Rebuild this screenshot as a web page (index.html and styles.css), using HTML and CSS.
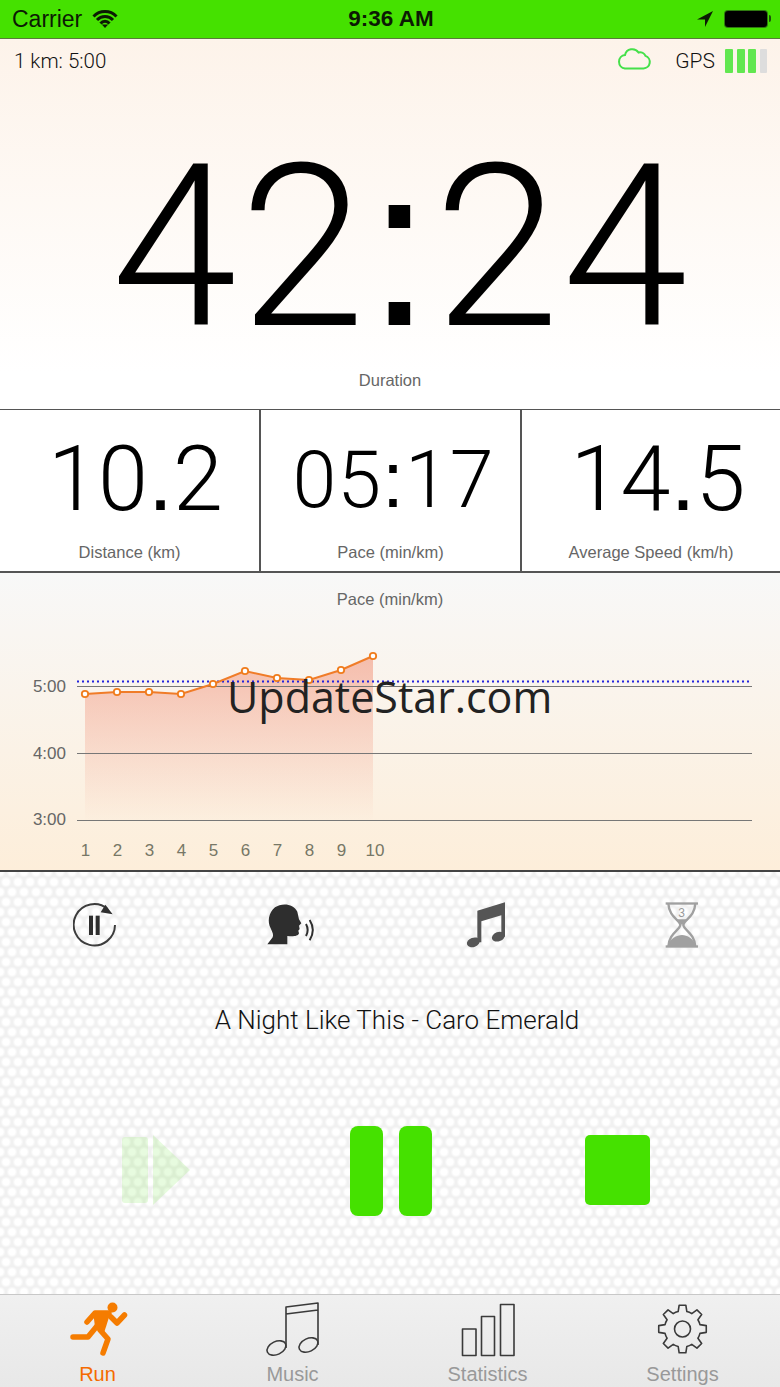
FILE: index.html
```html
<!DOCTYPE html>
<html lang="en">
<head>
<meta charset="utf-8">
<title>Run</title>
<link rel="stylesheet" href="styles.css">
</head>
<body>
<div class="app">
  <header class="status">
    <div class="status-left">
      <span class="carrier">Carrier</span>
      <svg class="wifi" viewBox="0 0 26 18" width="26" height="18"><path d="M1.5 6.5a16 16 0 0 1 23 0M5 10a11 11 0 0 1 16 0M8.500 13.400a6 6 0 0 1 9 0" /><polygon points="13,18 9.800,14.500 16.200,14.500" /></svg>
    </div>
    <div class="clock">9:36 AM</div>
    <div class="status-right">
      <svg class="loc" viewBox="0 0 16 16" width="16" height="16"><polygon points="16,0 0,8.500 8,8.500 8,16" /></svg>
      <span class="battery"><span class="battery-fill"></span></span>
    </div>
  </header>

  <section class="timer">
    <div class="timer-top">
      <span class="goal">1 km: 5:00</span>
      <div class="signals">
        <svg class="cloud" viewBox="0 0 36 23" width="36" height="23"><path d="M9 21.500H27.500a6.500 6.500 0 0 0 2-12.600A6 6 0 0 0 22.500 5.500 7.500 7.500 0 0 0 9 8 6.800 6.800 0 0 0 9 21.500Z" /></svg>
        <span class="gps">GPS</span>
        <span class="bars"><i class="bar"></i><i class="bar"></i><i class="bar"></i><i class="bar bar-off"></i></span>
      </div>
    </div>
    <div class="big">42<span class="sq">:</span>24</div>
    <div class="cap">Duration</div>
  </section>

  <section class="stats">
    <div class="stat">
      <div class="num num-a">10<span class="sq">.</span>2</div>
      <div class="cap">Distance (km)</div>
    </div>
    <div class="stat stat-mid">
      <div class="num num-b">05<span class="sq">:</span>17</div>
      <div class="cap">Pace (min/km)</div>
    </div>
    <div class="stat">
      <div class="num num-c">14<span class="sq">.</span>5</div>
      <div class="cap">Average Speed (km/h)</div>
    </div>
  </section>

  <section class="chart">
    <svg class="chart-svg" viewBox="0 573 780 297" width="780" height="297">
      <defs>
        <linearGradient id="area" x1="0" y1="0" x2="0" y2="1">
          <stop offset="0" stop-color="#f29a82" stop-opacity=".62"/>
          <stop offset="1" stop-color="#f29a82" stop-opacity="0"/>
        </linearGradient>
      </defs>
      <text class="c-title" x="390" y="605">Pace (min/km)</text>
      <path class="area" d="M85 694 117 692 149 692 181 694 213 684 245 671 277 678 309 680 341 670 373 656V822H85Z"/>
      <line class="grid" x1="77" y1="686.500" x2="752" y2="686.500"/>
      <line class="grid" x1="77" y1="753.500" x2="752" y2="753.500"/>
      <line class="grid" x1="77" y1="820.500" x2="752" y2="820.500"/>
      <line class="target" x1="77" y1="681.500" x2="752" y2="681.500"/>
      <path class="line" d="M85 694 117 692 149 692 181 694 213 684 245 671 277 678 309 680 341 670 373 656"/>
      <g class="dots">
        <circle cx="85" cy="694" r="3.200"/><circle cx="117" cy="692" r="3.200"/><circle cx="149" cy="692" r="3.200"/><circle cx="181" cy="694" r="3.200"/><circle cx="213" cy="684" r="3.200"/><circle cx="245" cy="671" r="3.200"/><circle cx="277" cy="678" r="3.200"/><circle cx="309" cy="680" r="3.200"/><circle cx="341" cy="670" r="3.200"/><circle cx="373" cy="656" r="3.200"/>
      </g>
      <g class="y-lab">
        <text x="66" y="692">5:00</text><text x="66" y="759">4:00</text><text x="66" y="825">3:00</text>
      </g>
      <g class="x-lab">
        <text x="85.500" y="856">1</text><text x="117.500" y="856">2</text><text x="149.500" y="856">3</text><text x="181.500" y="856">4</text><text x="213.500" y="856">5</text><text x="245.500" y="856">6</text><text x="277.500" y="856">7</text><text x="309.500" y="856">8</text><text x="341.500" y="856">9</text><text x="375" y="856">10</text>
      </g>
    </svg>
    <div class="watermark">UpdateStar.com</div>
  </section>

  <section class="controls">
    <div class="tools">
      <div class="tool">
        <svg viewBox="69 60 150 150" width="50" height="50"><path class="ic-stroke" d="M173 87A62 62 0 1 0 195 135"/><polygon class="ic-fill" points="166,74 188,103 152,97"/><rect class="ic-fill" x="117" y="107" width="12" height="58"/><rect class="ic-fill" x="137" y="107" width="12" height="58"/></svg>
      </div>
      <div class="tool">
        <svg viewBox="642 60 170 140" width="56.670" height="46.670"><path class="ic-fill" d="M652 193 668 172C671 165 668 158 662 145 652 125 655 100 675 82 695 68 730 70 742 95L747 118 754 130 747 137 749 147 745 152 747 160C745 170 725 170 712 168V193Z"/><path class="ic-wave" d="M768 132Q778 150 768 168M779 120Q798 150 779 181"/></svg>
      </div>
      <div class="tool">
        <svg viewBox="75 60 135 150" width="45" height="50"><path class="ic-note" d="M112 92 195 67V170H184V106L124 124V187H112Z"/><ellipse class="ic-note" cx="100" cy="187" rx="20" ry="14" transform="rotate(-20 100 187)"/><ellipse class="ic-note" cx="175" cy="170" rx="20" ry="14" transform="rotate(-20 175 170)"/></svg>
      </div>
      <div class="tool">
        <svg viewBox="673 60 110 150" width="36.670" height="50"><path class="glass-line" d="M686 70C688 112 719 118 722 135 719 152 688 160 686 200M767 70C765 112 734 118 731 135 734 152 765 160 767 200"/><rect class="glass" x="678" y="67" width="97" height="7"/><rect class="glass" x="678" y="196" width="97" height="7"/><path class="glass" d="M712 118H741L727 135ZM684 200C690 175 712 165 727 165 742 165 763 175 769 200Z"/><text class="glass-num" x="726" y="110">3</text></svg>
      </div>
    </div>
    <div class="song">A Night Like This - Caro Emerald</div>
    <div class="transport">
      <svg class="ghost" viewBox="0 0 68 70" width="68" height="70"><rect x="0" y="2" width="26" height="66" rx="3"/><polygon points="31,0 68,35 31,70"/></svg>
      <div class="pause"><span class="pause-bar"></span><span class="pause-bar"></span></div>
      <div class="stop"></div>
    </div>
  </section>

  <nav class="tabs">
    <a class="tab tab-on">
      <svg viewBox="66 1300 64 60" width="64" height="60"><circle class="run-fill" cx="112.500" cy="1308.500" r="5"/><path class="run-line" d="M87 1323 95 1314H109M111 1318 117 1324 124.500 1316M73 1338H88L97 1327M100 1331 108 1340 103 1354"/><polygon class="run-fill" points="93,1312 111,1312 104,1334 95,1328"/></svg>
      <span class="tab-label">Run</span>
    </a>
    <a class="tab">
      <svg viewBox="263.500 1300 60 60" width="60" height="60"><path class="tab-line" d="M286.500 1349V1308L318.500 1304V1346M286.500 1315 318.500 1311"/><ellipse class="tab-line" cx="277" cy="1349" rx="10" ry="6.500" transform="rotate(-25 277 1349)"/><ellipse class="tab-line" cx="309" cy="1346" rx="10" ry="6.500" transform="rotate(-25 309 1346)"/></svg>
      <span class="tab-label">Music</span>
    </a>
    <a class="tab">
      <svg viewBox="458 1300 60 60" width="60" height="60"><rect class="tab-line" x="462.500" y="1330" width="13.500" height="26.500"/><rect class="tab-line" x="481.500" y="1317.500" width="13" height="39"/><rect class="tab-line" x="500.500" y="1305.500" width="13.500" height="51"/></svg>
      <span class="tab-label">Statistics</span>
    </a>
    <a class="tab">
      <svg viewBox="-29.500 -30 60 60" width="60" height="60"><path class="tab-line" d="M-4.350-17.460-3.340-23.770H3.340L4.350-17.460A18 18 0 0 1 9.270-15.420L14.450-19.170 19.170-14.450 15.420-9.270A18 18 0 0 1 17.460-4.350L23.770-3.340V3.340L17.460 4.350A18 18 0 0 1 15.420 9.270L19.170 14.450 14.450 19.170 9.270 15.420A18 18 0 0 1 4.350 17.460L3.340 23.770H-3.340L-4.350 17.460A18 18 0 0 1-9.270 15.420L-14.450 19.170-19.170 14.450-15.420 9.270A18 18 0 0 1-17.460 4.350L-23.770 3.340V-3.340L-17.460-4.350A18 18 0 0 1-15.420-9.270L-19.170-14.450-14.450-19.170-9.270-15.420A18 18 0 0 1-4.350-17.460Z"/><circle class="tab-line" r="8"/></svg>
      <span class="tab-label">Settings</span>
    </a>
  </nav>
</div>
</body>
</html>
```

FILE: styles.css
```css
* { box-sizing: border-box; }
html, body { margin: 0; padding: 0; }
body { font-family: "Liberation Sans", sans-serif; color: #111; background: #fff; }
.app { width: 780px; height: 1387px; display: flex; flex-direction: column; overflow: hidden; }

.status { height: 39px; background: #45e100; border-bottom: 1px solid #5a7a3a; display: grid; grid-template-columns: 1fr auto 1fr; align-items: center; padding: 0 10px 0 12px; font-size: 23px; color: #0c1a04; }
.status-left { display: flex; align-items: center; gap: 10px; }
.wifi path { fill: none; stroke: #0c1a04; stroke-width: 3; }
.wifi polygon { fill: #0c1a04; }
.clock { font-weight: 700; font-size: 22.500px; }
.status-right { display: flex; justify-content: flex-end; align-items: center; gap: 11px; }
.loc polygon { fill: #0c1a04; }
.battery { width: 44px; height: 18px; margin-right: 2px; border-radius: 4px; background: #2f7a10; padding: 1px; position: relative; }
.battery::after { content: ""; position: absolute; right: -3px; top: 5px; width: 2px; height: 7px; background: #1e4d0c; border-radius: 0 2px 2px 0; }
.battery-fill { display: block; height: 100%; border-radius: 3px; background: #000; }

.timer { height: 371px; background: linear-gradient(#fdf3ea, #fff 90%); border-bottom: 1px solid #555; display: flex; flex-direction: column; }
.timer-top { height: 44px; display: flex; justify-content: space-between; align-items: center; padding: 0 13px 0 14px; }
.goal { font-family: "Roboto", sans-serif; font-size: 20.500px; font-weight: 300; color: #111; }
.signals { display: flex; align-items: center; }
.cloud { margin-bottom: 6px; }
.cloud path { fill: none; stroke: #45e04a; stroke-width: 2; }
.gps { font-family: "Roboto", sans-serif; font-size: 21px; font-weight: 300; margin-left: 23px; color: #111; }
.bars { display: flex; gap: 3.700px; margin-left: 10px; }
.bar { display: block; width: 8px; height: 24px; background: #62e750; border-radius: 1px; }
.bar-off { width: 7px; background: #ddd; }
.big { font-family: "Roboto", sans-serif; text-align: center; font-size: 226px; padding-top: 50px; line-height: 230px; font-weight: 300; letter-spacing: 3px; color: #000; padding-left: 22px; white-space: nowrap; }
.sq { font-family: "Liberation Sans", sans-serif; font-weight: 400; line-height: 0; }
.cap { text-align: center; font-size: 16.500px; color: #666; }
.timer .cap { margin-top: 8px; }

.stats { height: 163px; display: grid; grid-template-columns: 259px 263px 258px; border-bottom: 2px solid #555; }
.stat { display: flex; flex-direction: column; padding-top: 20px; }
.stat-mid { border-left: 2px solid #555; border-right: 2px solid #555; }
.num { font-family: "Roboto", sans-serif; text-align: center; font-weight: 300; color: #000; white-space: nowrap; line-height: 100px; }
.num-a { font-size: 90px; padding-left: 12px; }
.num-b { font-size: 79px; padding-left: 6px; letter-spacing: 1px; }
.num-c { font-size: 90px; padding-left: 14px; }
.stat .cap { margin-top: 13px; }

.chart { height: 299px; position: relative; background: linear-gradient(#f8f8f8, #fdeeda); border-bottom: 2px solid #444; }
.chart-svg { display: block; }
.c-title { font-size: 16.500px; fill: #666; text-anchor: middle; }
.area { fill: url(#area); }
.grid { stroke: #777; stroke-width: 1; }
.target { stroke: #2222dd; stroke-width: 2; stroke-dasharray: 2 3; }
.line { fill: none; stroke: #f07c28; stroke-width: 2; }
.dots circle { fill: #fff; stroke: #f07c1c; stroke-width: 1.800; }
.y-lab text { font-size: 17px; fill: #666; text-anchor: end; }
.x-lab text { font-size: 17px; fill: #776; text-anchor: middle; }
.watermark { position: absolute; left: 227px; top: 94px; font-family: "Open Sans", sans-serif; font-size: 43px; line-height: 60px; color: #222; white-space: nowrap; }

.controls { flex: 1; display: flex; flex-direction: column; background-color: #f1f1f1; background-image: radial-gradient(circle, #fff 3px, rgba(255,255,255,0) 5.500px), radial-gradient(circle, #fff 3px, rgba(255,255,255,0) 5.500px); background-size: 12px 20px; background-position: 0 0, 6px 10px; }
.tools { display: grid; grid-template-columns: repeat(4, 1fr); padding-top: 28px; height: 106px; }
.tool { display: flex; justify-content: center; }
.ic-stroke { fill: none; stroke: #3c3c3c; stroke-width: 6; }
.ic-fill { fill: #2e2e2e; }
.ic-wave { fill: none; stroke: #2e2e2e; stroke-width: 6; }
.ic-note { fill: #555; }
.glass { fill: #a0a0a0; }
.glass-line { fill: none; stroke: #a0a0a0; stroke-width: 7; }
.glass-num { font-family: "Liberation Sans", sans-serif; font-size: 36px; fill: #999; text-anchor: middle; }
.song { font-family: "Roboto", sans-serif; text-align: center; font-size: 26px; font-weight: 300; color: #111; padding-left: 14px; line-height: 30px; margin-top: 27px; white-space: nowrap; }
.transport { display: flex; align-items: center; padding-left: 122px; margin-top: 91px; }
.ghost { fill: #45e100; opacity: .12; margin-bottom: 2px; }
.pause { display: flex; gap: 16px; margin-left: 160px; }
.pause-bar { display: block; width: 33px; height: 90px; background: #45e100; border-radius: 8px; }
.stop { width: 65px; height: 70px; background: #45e100; border-radius: 5px; margin-left: 153px; margin-bottom: 2px; }

.tabs { height: 93px; display: grid; grid-template-columns: repeat(4, 1fr); background: linear-gradient(#f0f0f0, #e8e8e8); border-top: 1px solid #c8c8c8; }
.tab { display: flex; flex-direction: column; align-items: center; padding-top: 4px; }
.tab-label { font-size: 20px; line-height: 22px; color: #999; margin-top: 4px; }
.tab-on .tab-label { color: #f56b00; }
.run-fill { fill: #f57c00; }
.run-line { fill: none; stroke: #f57c00; stroke-width: 5.500; stroke-linecap: round; stroke-linejoin: round; }
.tab-line { fill: none; stroke: #3a3a3a; stroke-width: 1.600; stroke-linejoin: round; }
```
